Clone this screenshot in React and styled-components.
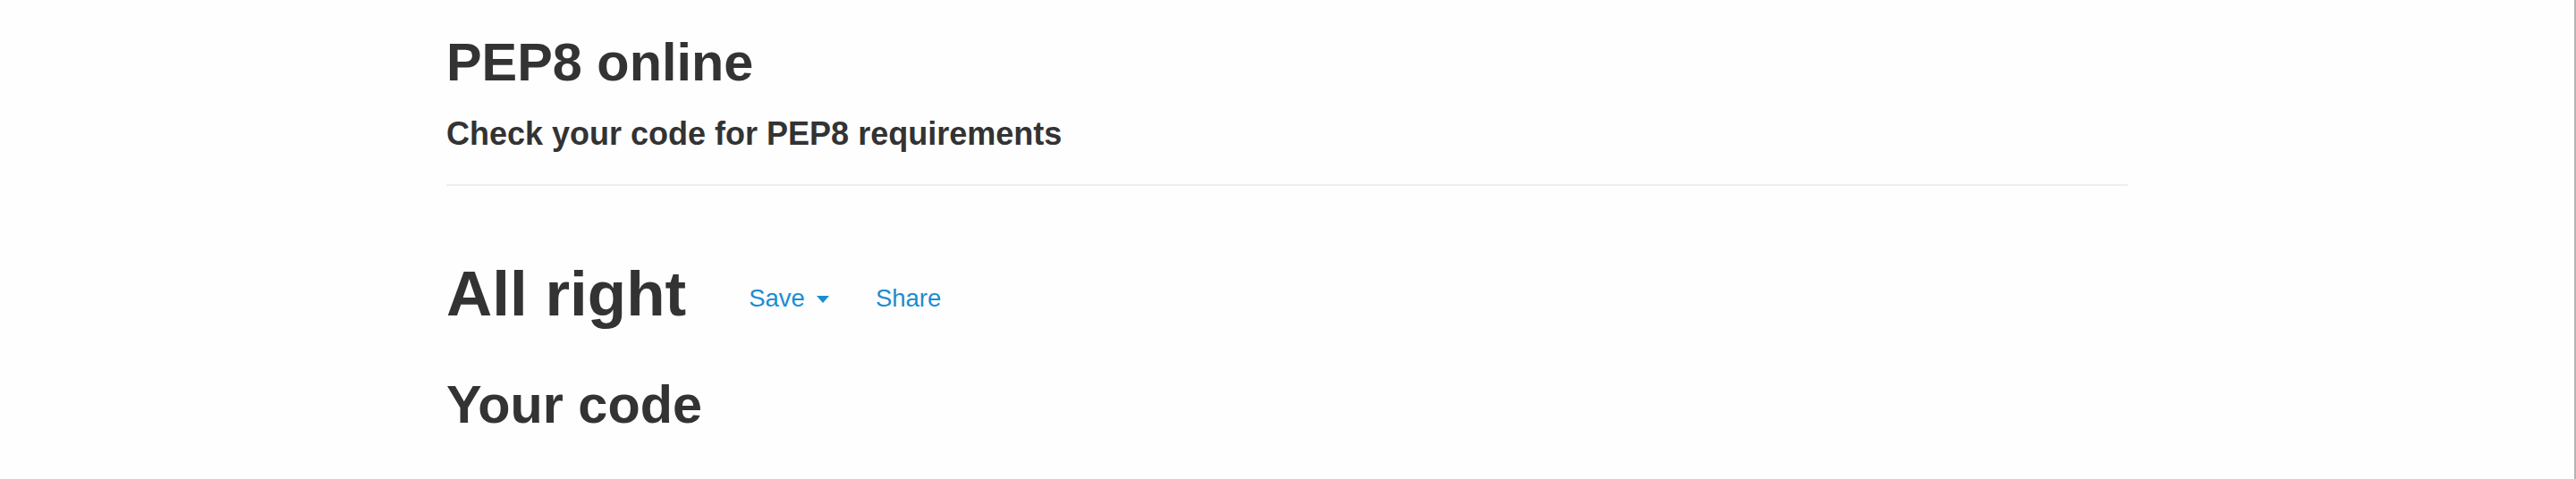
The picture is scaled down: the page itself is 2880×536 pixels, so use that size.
import React from "react";
import styled, { createGlobalStyle } from "styled-components";

const Global = createGlobalStyle`
  html, body { margin: 0; padding: 0; background: #ffffff; }
  body { font-family: "Liberation Sans", Arial, Helvetica, sans-serif; color: #333333; }
`;

const Page = styled.div`
  box-sizing: border-box;
  min-height: 536px;
  border-right: 2px solid #b4b4b4;
  background: #fefefe;
`;

const Container = styled.div`
  width: 1880px;
  margin: 0 auto;
  padding-top: 37px;
`;

const Title = styled.h1`
  margin: 0;
  font-size: 59.4px;
  line-height: 1.1;
  font-weight: 700;
  color: #333;
`;

const Subtitle = styled.h3`
  margin: 28px 0 0;
  font-size: 36px;
  line-height: 1.1;
  font-weight: 700;
  color: #333;
`;

const Rule = styled.hr`
  margin: 36px 0 0;
  border: 0;
  border-top: 2px solid #eeeeee;
  height: 0;
`;

const ResultRow = styled.div`
  display: flex;
  align-items: center;
  margin-top: 82px;
`;

const Result = styled.h2`
  margin: 0;
  font-size: 71px;
  line-height: 1.1;
  font-weight: 700;
  color: #333;
`;

const Actions = styled.div`
  display: flex;
  align-items: center;
  gap: 52px;
  margin-left: 70px;
  padding-top: 10px;
`;

const ActionLink = styled.a`
  display: inline-flex;
  align-items: center;
  gap: 13px;
  font-size: 27.5px;
  line-height: 1.2;
  color: #1a8dd1;
  text-decoration: none;
  cursor: pointer;
`;

const Caret = styled.span`
  display: inline-block;
  width: 0;
  height: 0;
  border-left: 7.5px solid transparent;
  border-right: 7.5px solid transparent;
  border-top: 8px solid #1a8dd1;
  margin-top: 2px;
`;

const Section = styled.h1`
  margin: 52px 0 0;
  font-size: 59.4px;
  line-height: 1.1;
  font-weight: 700;
  color: #333;
`;

export default function App() {
  return (
    <>
      <Global />
      <Page>
        <Container>
          <Title>PEP8 online</Title>
          <Subtitle>Check your code for PEP8 requirements</Subtitle>
          <Rule />
          <ResultRow>
            <Result>All right</Result>
            <Actions>
              <ActionLink>
                Save <Caret />
              </ActionLink>
              <ActionLink>Share</ActionLink>
            </Actions>
          </ResultRow>
          <Section>Your code</Section>
        </Container>
      </Page>
    </>
  );
}
